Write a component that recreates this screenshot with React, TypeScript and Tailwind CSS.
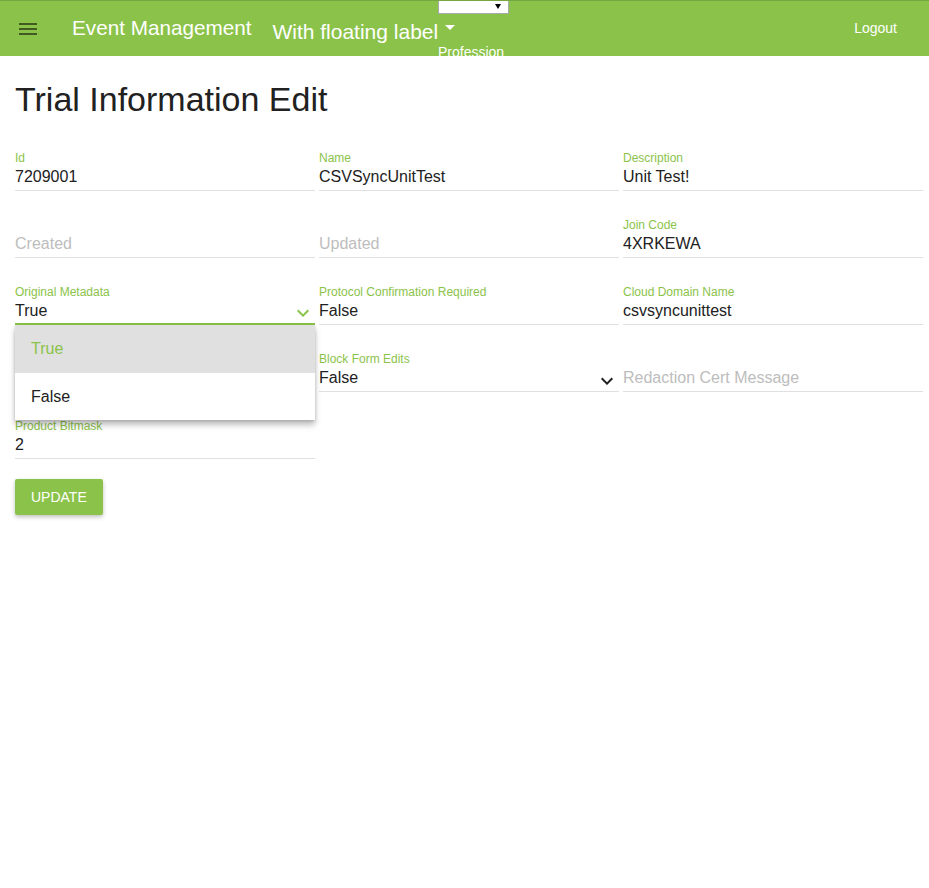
import React from 'react';

const font = { fontFamily: '"Liberation Sans", Arial, sans-serif' };

function Chevron({ className }: { className: string }) {
  return (
    <svg viewBox="0 0 24 24" className={`absolute right-0 bottom-[-2px] w-6 h-6 ${className}`} fill="currentColor">
      <path d="M7.41 8.59L12 13.17l4.59-4.58L18 10l-6 6-6-6 1.41-1.41z" />
    </svg>
  );
}

function Field({
  label,
  value,
  placeholder,
  select,
  focused,
  children
}: {
  label?: string;
  value?: string;
  placeholder?: string;
  select?: boolean;
  focused?: boolean;
  children?: React.ReactNode;
}) {
  return (
    <div
      className={`relative h-[67px] flex flex-col justify-end ${
        focused ? 'border-b-2 border-[#8bc34a] pb-[2px]' : 'border-b border-[#e0e0e0] pb-[3px]'
      }`}
    >
      {label && <div className="mb-[2px] text-[12px] leading-[14px] h-[14px] text-[#8bc34a]">{label}</div>}
      <div className={`text-[16px] leading-[20px] h-[20px] ${value ? 'text-[#212121]' : 'text-[#bdbdbd]'}`}>
        {value || placeholder}
      </div>
      {select && <Chevron className={focused ? 'text-[#8bc34a]' : 'text-[#212121]'} />}
      {children}
    </div>
  );
}

export default function App() {
  return (
    <div className="min-h-[888px] bg-white" style={font}>
      {/* toolbar */}
      <div className="relative h-[56px] bg-[#8bc34a] border-t border-[#76a63f] flex items-center pl-4 pr-8 overflow-hidden">
        <svg viewBox="0 0 24 24" className="w-6 h-6 text-[#405a22]" fill="currentColor">
          <path d="M3 18h18v-2H3v2zm0-5h18v-2H3v2zm0-7v2h18V6H3z" />
        </svg>
        <span className="ml-8 text-[20.7px] text-white pb-[1px]">Event Management</span>
        <span className="ml-[21px] text-[21px] text-white pt-[7px] flex items-center">
          With floating label
          <span className="ml-[7px] mb-[9px] w-0 h-0 border-l-[5px] border-r-[5px] border-t-[5px] border-l-transparent border-r-transparent border-t-white" />
        </span>
        <div className="absolute left-[438px] top-[-1px] flex flex-col">
          <div className="w-[71px] h-[14px] bg-white border border-t-0 border-[#a9a9a9] flex items-center justify-end pr-[7px]">
            <span className="w-0 h-0 border-l-[3px] border-r-[3px] border-t-[5px] border-l-transparent border-r-transparent border-t-black" />
          </div>
          <span className="mt-[30px] text-[14px] leading-[16px] text-white">Profession</span>
        </div>
        <span className="ml-auto text-[14px] text-white">Logout</span>
      </div>

      <div className="px-[15px] pt-[23px]">
        <h1 className="text-[34px] leading-[40px] h-[40px] text-[#212121] font-normal">Trial Information Edit</h1>

        <div className="mt-[5px] grid grid-cols-[300px_300px_300px] gap-x-[4px]">
          <Field label="Id" value="7209001" />
          <Field label="Name" value="CSVSyncUnitTest" />
          <Field label="Description" value="Unit Test!" />

          <Field placeholder="Created" />
          <Field placeholder="Updated" />
          <Field label="Join Code" value="4XRKEWA" />

          <Field label="Original Metadata" value="True" select focused>
            <div className="absolute left-0 top-full mt-[2px] w-[300px] z-10 bg-white shadow-[0_5px_6px_rgba(0,0,0,0.25),0_1px_3px_rgba(0,0,0,0.15)] flex flex-col">
              <div className="h-[48px] flex items-center pl-4 bg-[#e0e0e0] text-[16px] text-[#8bc34a]">True</div>
              <div className="h-[47px] flex items-center pl-4 text-[16px] text-[#212121]">False</div>
            </div>
          </Field>
          <Field label="Protocol Confirmation Required" value="False" />
          <Field label="Cloud Domain Name" value="csvsyncunittest" />

          {/* field hidden behind the open menu */}
          <Field />
          <Field label="Block Form Edits" value="False" select />
          <Field placeholder="Redaction Cert Message" />

          <Field label="Product Bitmask" value="2" />
        </div>

        <button className="mt-[20px] h-[36px] px-4 rounded-[2px] bg-[#8bc34a] text-white text-[14px] uppercase shadow-[0_2px_4px_rgba(0,0,0,0.25)]">
          Update
        </button>
      </div>
    </div>
  );
}
